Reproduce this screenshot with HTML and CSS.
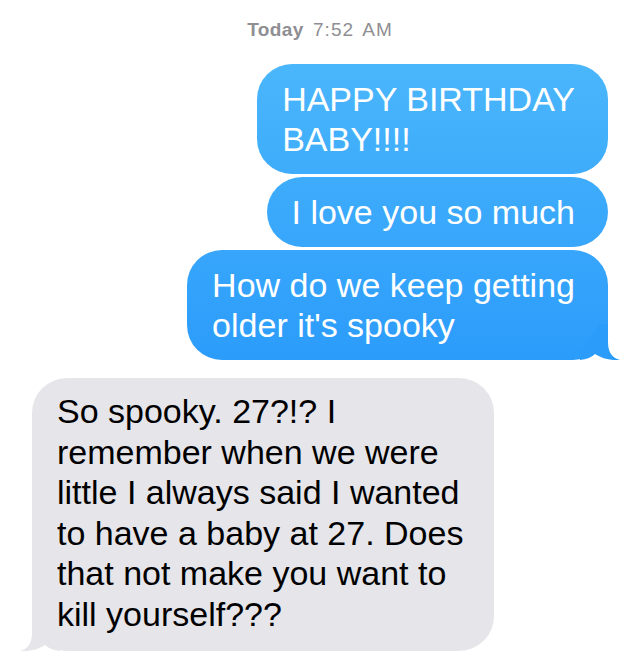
FILE: index.html
```html
<!DOCTYPE html>
<html lang="en">
<head>
  <meta charset="UTF-8">
  <title>Messages</title>
  <link rel="stylesheet" href="styles.css">
</head>
<body>

  <div class="thread">
    <p class="stamp"><b>Today</b> 7:52 AM</p>

    <div class="group sent">
      <div class="bubble">HAPPY BIRTHDAY<br>BABY!!!!</div>
      <div class="bubble">I love you so much</div>
      <div class="bubble">
        How do we keep getting<br>older it's spooky
        <svg class="tail" viewBox="-10 0 40 36" width="40" height="36">
          <path d="M18,0 L18,18 Q18,33 30,36 Q16,37 5,30 Q0,35 -10,36 L-10,30 L10,0 Z" fill="#2c9cfb"/>
        </svg>
      </div>
    </div>

    <div class="group received">
      <div class="bubble">
        So spooky. 27?!? I<br>remember when we were<br>little I always said I wanted<br>to have a baby at 27. Does<br>that not make you want to<br>kill yourself???
        <svg class="tail" viewBox="-10 0 40 36" width="40" height="36">
          <path d="M18,0 L18,18 Q18,33 30,36 Q16,37 5,30 Q0,35 -10,36 L-10,30 L10,0 Z" fill="#e5e5ea"/>
        </svg>
      </div>
    </div>
  </div>

</body>
</html>
```

FILE: styles.css
```css
body {
  font-family: 'Liberation Sans', Arial, sans-serif;
  background-color: #fff;
  margin: 0;
  padding: 0;
}

.thread {
  padding: 18px 32px 0;
}

.stamp {
  margin: 0 0 22px;
  text-align: center;
  font-size: 19px;
  line-height: 24px;
  color: #8e8e93;
  letter-spacing: 1px;
  word-spacing: 3px;
}

.stamp b {
  font-weight: bold;
  letter-spacing: 0.4px;
}

.group {
  display: flex;
  flex-direction: column;
  gap: 3px;
}

.sent {
  align-items: flex-end;
}

.received {
  align-items: flex-start;
  margin-top: 18px;
}

.bubble {
  position: relative;
  font-size: 34px;
  line-height: 40px;
  border-radius: 35px;
  white-space: nowrap;
}

.sent .bubble {
  padding: 15px 33px 15px 25px;
  color: #fff;
  background: linear-gradient(to bottom, #4ab6fb 64px, #2c9cfb 359px) fixed;
}

.received .bubble {
  padding: 13px 31px 16px 25px;
  line-height: 40.6px;
  color: #000;
  background-color: #e5e5ea;
}

.tail {
  position: absolute;
  bottom: 0;
  display: block;
}

.sent .tail {
  right: -12px;
}

.received .tail {
  left: -12px;
  transform: scaleX(-1);
}
```
